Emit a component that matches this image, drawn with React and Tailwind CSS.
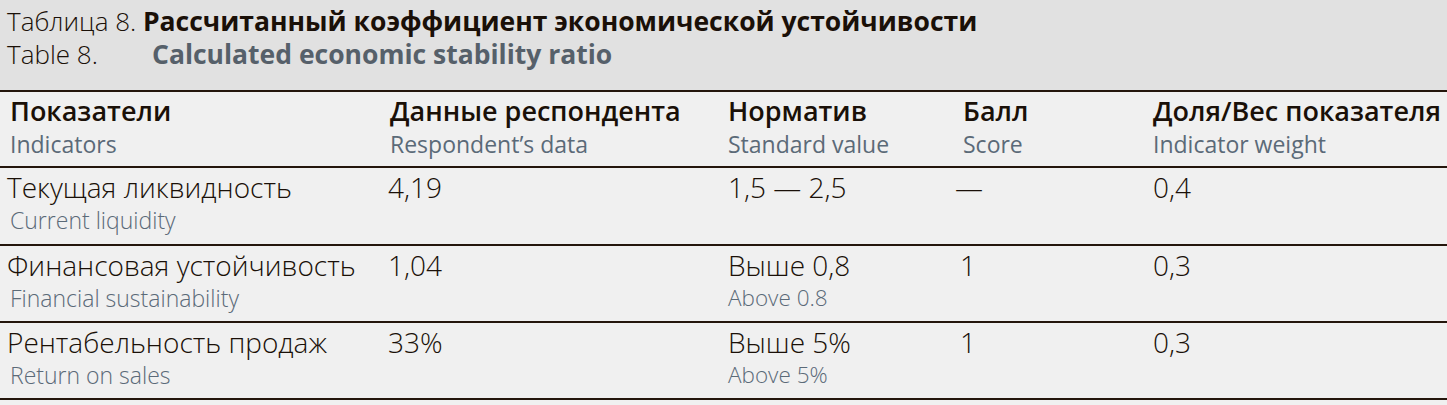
const rows = [
  { ru: 'Текущая ликвидность', en: 'Current liquidity', data: '4,19', norm: '1,5 — 2,5', normEn: '', score: '—', weight: '0,4', h: 'h-[78px]' },
  { ru: 'Финансовая устойчивость', en: 'Financial sustainability', data: '1,04', norm: 'Выше 0,8', normEn: 'Above 0.8', score: '1', weight: '0,3', h: 'h-[77px]' },
  { ru: 'Рентабельность продаж', en: 'Return on sales', data: '33%', norm: 'Выше 5%', normEn: 'Above 5%', score: '1', weight: '0,3', h: 'h-[77px]' },
];

const heads = [
  ['Показатели', 'Indicators'],
  ['Данные респондента', 'Respondent’s data'],
  ['Норматив', 'Standard value'],
  ['Балл', 'Score'],
  ['Доля/Вес показателя', 'Indicator weight'],
];

export default function App() {
  return (
    <div className="w-[1447px] h-[405px] bg-[#f0f0f0] text-[#1a1008] font-['Open_Sans',sans-serif] overflow-hidden">
      {/* caption */}
      <div className="h-[90px] bg-[#e1e1e1] pt-[5px] pl-[7px] text-[26px] leading-[33px]">
        <div>
          <span className="font-light">Таблица 8. </span>
          <span className="font-bold text-[26.5px]">Рассчитанный коэффициент экономической устойчивости</span>
        </div>
        <div className="flex">
          <span className="font-light w-[145px]">Table 8.</span>
          <span className="font-bold text-[26.5px] text-[#56606a]">Calculated economic stability ratio</span>
        </div>
      </div>
      {/* head */}
      <div className="grid grid-cols-[380px_338px_235px_190px_1fr] pl-[10px] h-[78px] border-y-2 border-[#24160c] pt-[3px]">
        {heads.map(([ru, en]) => (
          <div key={ru}>
            <div className="text-[27px] leading-[32px] font-semibold whitespace-nowrap">{ru}</div>
            <div className="text-[23px] leading-[34px] text-[#5b6a78]">{en}</div>
          </div>
        ))}
      </div>
      {rows.map(r => (
        <div key={r.ru} className={`grid grid-cols-[381px_340px_227px_198px_1fr] pl-[7px] pt-[3px] border-b-2 border-[#24160c] font-light ${r.h}`}>
          <div>
            <div className="text-[28px] leading-[32px] whitespace-nowrap">{r.ru}</div>
            <div className="text-[23px] leading-[34px] text-[#5b6a78] pl-[3px]">{r.en}</div>
          </div>
          <div className="text-[28px] leading-[32px]">{r.data}</div>
          <div>
            <div className="text-[28px] leading-[32px]">{r.norm}</div>
            <div className="text-[22.5px] leading-[34px] text-[#5b6a78]">{r.normEn}</div>
          </div>
          <div className={`text-[28px] leading-[32px] ${r.score === '—' ? '' : 'pl-[5px]'}`}>{r.score}</div>
          <div className="text-[28px] leading-[32px]">{r.weight}</div>
        </div>
      ))}
    </div>
  );
}
